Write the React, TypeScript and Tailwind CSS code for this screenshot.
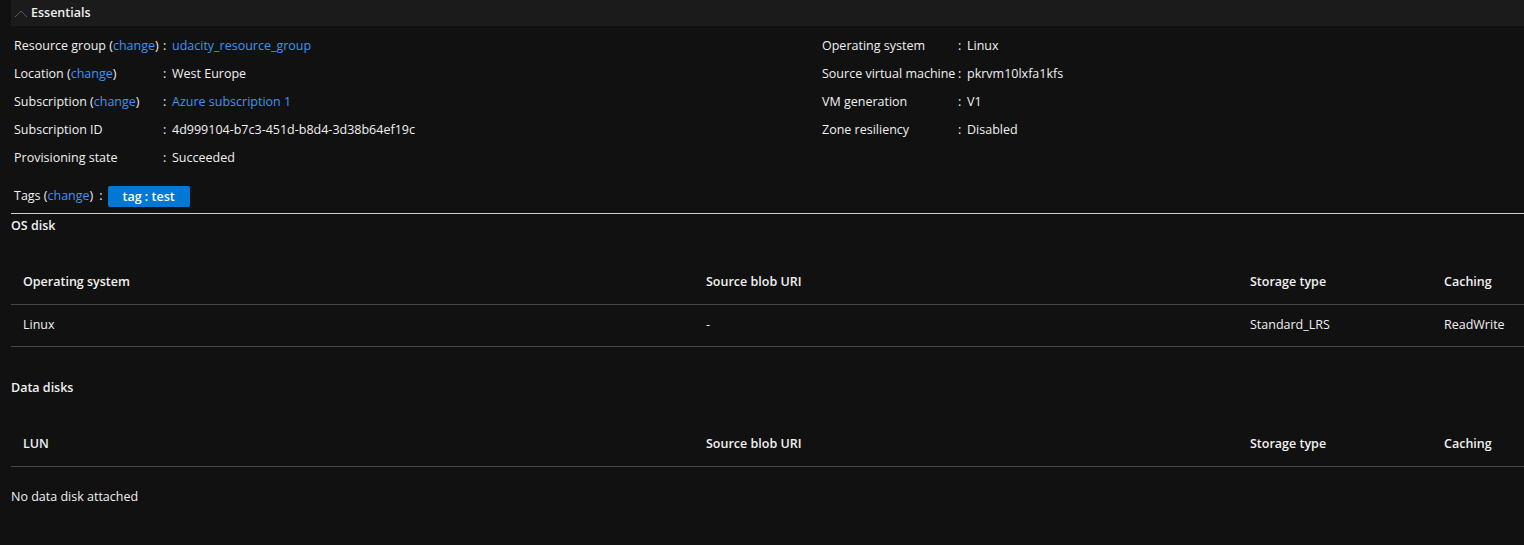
import React from "react";

const font = { fontFamily: '"Open Sans", "Noto Sans", sans-serif' };

function Link({ children }: { children: React.ReactNode }) {
  return <span className="text-[#3f93f8]">{children}</span>;
}

function Prop({ label, value, labelW }: { label: React.ReactNode; value: React.ReactNode; labelW: string }) {
  return (
    <div className="flex h-[28px] items-center">
      <div className={labelW}>{label}</div>
      <div className="w-[9px]">:</div>
      <div>{value}</div>
    </div>
  );
}

function Table({ first, rows }: { first: string; rows: string[][] }) {
  return (
    <div className="mt-[25px]">
      <div className="flex h-[44px] items-center border-b border-[#474747] pl-[12px] font-semibold">
        <div className="w-[683px]">{first}</div>
        <div className="w-[544px]">Source blob URI</div>
        <div className="w-[194px]">Storage type</div>
        <div>Caching</div>
      </div>
      {rows.map((r, i) => (
        <div key={i} className="flex h-[42px] items-center border-b border-[#474747] pl-[12px]">
          <div className="w-[683px]">{r[0]}</div>
          <div className="w-[544px]">{r[1]}</div>
          <div className="w-[194px]">{r[2]}</div>
          <div>{r[3]}</div>
        </div>
      ))}
    </div>
  );
}

export default function App() {
  return (
    <div className="min-h-[545px] bg-[#111111] text-[12.5px] text-[#f0f0f0]" style={font}>
      {/* header */}
      <div className="ml-[11px] flex h-[26px] items-center bg-[#1b1b1b] pt-[1px]">
        <svg width="14" height="8" viewBox="0 0 14 8" className="ml-[3px]">
          <path d="M1 7 L7 1 L13 7" fill="none" stroke="#5a5a5a" strokeWidth="1" />
        </svg>
        <span className="ml-[3px] font-semibold">Essentials</span>
      </div>

      <div className="flex pt-[6px] pl-[14px]">
        <div className="w-[808px]">
          <Prop labelW="w-[149px]" label={<>Resource group (<Link>change</Link>)</>} value={<Link>udacity_resource_group</Link>} />
          <Prop labelW="w-[149px]" label={<>Location (<Link>change</Link>)</>} value="West Europe" />
          <Prop labelW="w-[149px]" label={<>Subscription (<Link>change</Link>)</>} value={<Link>Azure subscription 1</Link>} />
          <Prop labelW="w-[149px]" label="Subscription ID" value="4d999104-b7c3-451d-b8d4-3d38b64ef19c" />
          <Prop labelW="w-[149px]" label="Provisioning state" value="Succeeded" />
        </div>
        <div>
          <Prop labelW="w-[136px]" label="Operating system" value="Linux" />
          <Prop labelW="w-[136px]" label="Source virtual machine" value="pkrvm10lxfa1kfs" />
          <Prop labelW="w-[136px]" label="VM generation" value="V1" />
          <Prop labelW="w-[136px]" label="Zone resiliency" value="Disabled" />
        </div>
      </div>

      <div className="mt-[13px] flex h-[22px] items-center pl-[14px]">
        <span>Tags (<Link>change</Link>)</span>
        <span className="ml-[6px]">:</span>
        <span className="ml-[5px] flex h-[21px] w-[82px] items-center justify-center rounded-[2px] bg-[#0078d4] pt-[2px] font-semibold text-white">
          tag : test
        </span>
      </div>

      <div className="ml-[11px] mt-[6px] border-t border-[#d0d0d0]">
        <div className="pt-[3px] font-semibold">OS disk</div>
        <Table first="Operating system" rows={[["Linux", "-", "Standard_LRS", "ReadWrite"]]} />
        <div className="mt-[32px] font-semibold">Data disks</div>
        <Table first="LUN" rows={[]} />
        <div className="mt-[21px]">No data disk attached</div>
      </div>
    </div>
  );
}
